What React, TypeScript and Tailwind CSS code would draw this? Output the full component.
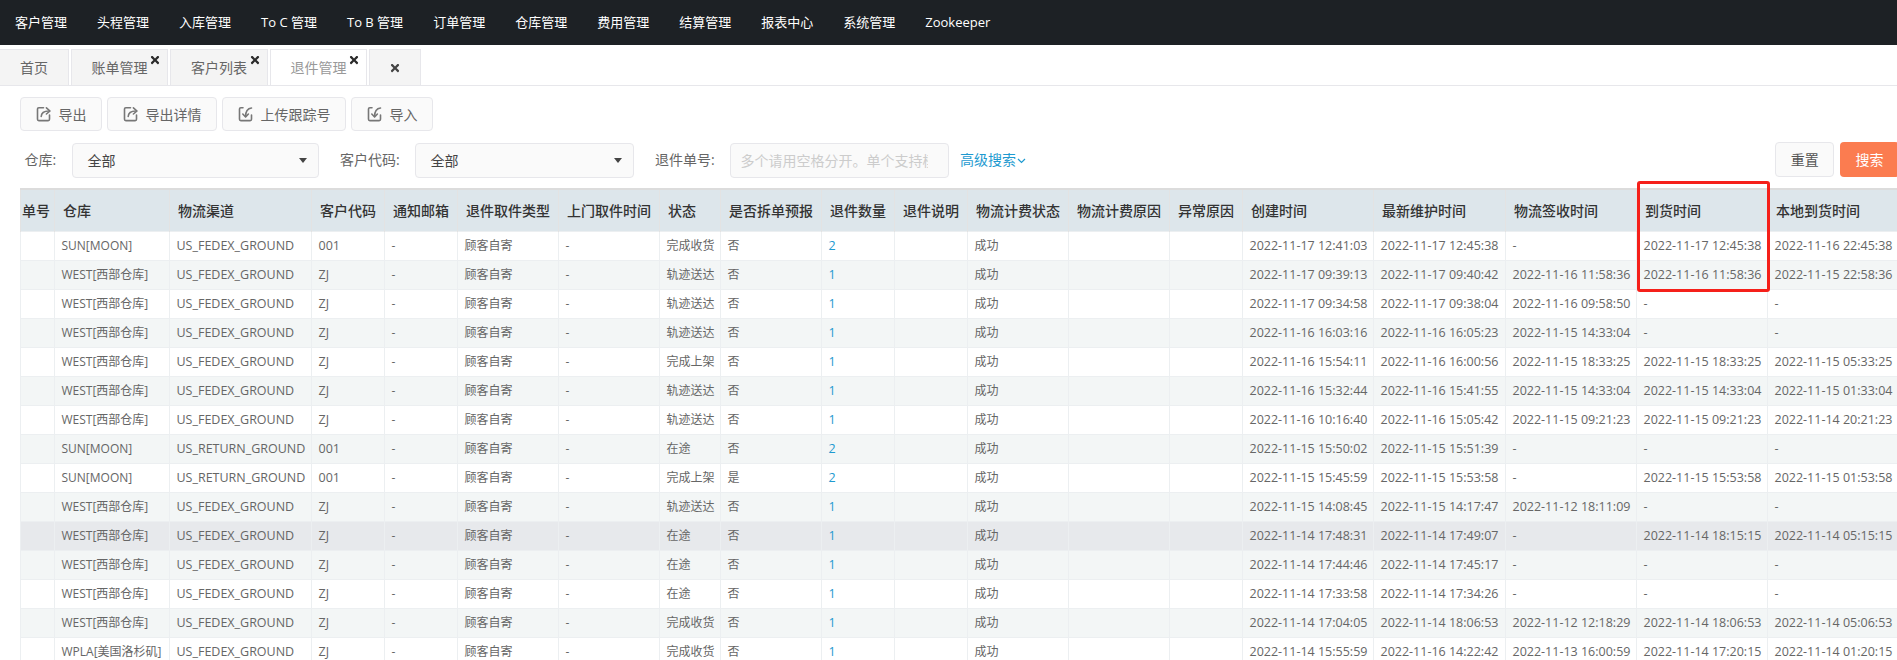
import React from "react";
import { FaTimes } from "react-icons/fa";

const font = "font-['Open_Sans','Noto_Sans_CJK_SC',sans-serif]";

const navItems = ["客户管理", "头程管理", "入库管理", "To C 管理", "To B 管理", "订单管理", "仓库管理", "费用管理", "结算管理", "报表中心", "系统管理", "Zookeeper"];

const headers = ["单号", "仓库", "物流渠道", "客户代码", "通知邮箱", "退件取件类型", "上门取件时间", "状态", "是否拆单预报", "退件数量", "退件说明", "物流计费状态", "物流计费原因", "异常原因", "创建时间", "最新维护时间", "物流签收时间", "到货时间", "本地到货时间"];

const W = "WEST[西部仓库]";
const S = "SUN[MOON]";
const F = "US_FEDEX_GROUND";
const R = "US_RETURN_GROUND";
const D = "2022-11-";

type Row = [string, string, string, string, string, string, string, string, string, string, string];

const rows: Row[] = [
  [S, F, "001", "完成收货", "否", "2", "17 12:41:03", "17 12:45:38", "-", "17 12:45:38", "16 22:45:38"],
  [W, F, "ZJ", "轨迹送达", "否", "1", "17 09:39:13", "17 09:40:42", "16 11:58:36", "16 11:58:36", "15 22:58:36"],
  [W, F, "ZJ", "轨迹送达", "否", "1", "17 09:34:58", "17 09:38:04", "16 09:58:50", "-", "-"],
  [W, F, "ZJ", "轨迹送达", "否", "1", "16 16:03:16", "16 16:05:23", "15 14:33:04", "-", "-"],
  [W, F, "ZJ", "完成上架", "否", "1", "16 15:54:11", "16 16:00:56", "15 18:33:25", "15 18:33:25", "15 05:33:25"],
  [W, F, "ZJ", "轨迹送达", "否", "1", "16 15:32:44", "16 15:41:55", "15 14:33:04", "15 14:33:04", "15 01:33:04"],
  [W, F, "ZJ", "轨迹送达", "否", "1", "16 10:16:40", "16 15:05:42", "15 09:21:23", "15 09:21:23", "14 20:21:23"],
  [S, R, "001", "在途", "否", "2", "15 15:50:02", "15 15:51:39", "-", "-", "-"],
  [S, R, "001", "完成上架", "是", "2", "15 15:45:59", "15 15:53:58", "-", "15 15:53:58", "15 01:53:58"],
  [W, F, "ZJ", "轨迹送达", "否", "1", "15 14:08:45", "15 14:17:47", "12 18:11:09", "-", "-"],
  [W, F, "ZJ", "在途", "否", "1", "14 17:48:31", "14 17:49:07", "-", "14 18:15:15", "14 05:15:15"],
  [W, F, "ZJ", "在途", "否", "1", "14 17:44:46", "14 17:45:17", "-", "-", "-"],
  [W, F, "ZJ", "在途", "否", "1", "14 17:33:58", "14 17:34:26", "-", "-", "-"],
  [W, F, "ZJ", "完成收货", "否", "1", "14 17:04:05", "14 18:06:53", "12 12:18:29", "14 18:06:53", "14 05:06:53"],
  ["WPLA[美国洛杉矶]", F, "ZJ", "完成收货", "否", "1", "14 15:55:59", "16 14:22:42", "13 16:00:59", "14 17:20:15", "14 01:20:15"],
];

const dt = (v: string) => (v === "-" ? "-" : D + v);

function ExportIcon() {
  return (
    <svg width="16" height="16" viewBox="0 0 16 16" fill="none" stroke="#777" strokeWidth="1.6" strokeLinecap="round" strokeLinejoin="round">
      <path d="M7.500 1.800H2.800A1.300 1.300 0 0 0 1.500 3.100v10.200a1.300 1.300 0 0 0 1.300 1.300h9.400a1.300 1.300 0 0 0 1.300-1.300V9" />
      <path d="M5.200 10.500C5.400 7 7.800 5 12.800 5" />
      <path d="M10.400 1.800 14 5l-3.600 3" />
    </svg>
  );
}

function ImportIcon() {
  return (
    <svg width="16" height="16" viewBox="0 0 16 16" fill="none" stroke="#777" strokeWidth="1.6" strokeLinecap="round" strokeLinejoin="round">
      <path d="M5 1.800H2.800A1.300 1.300 0 0 0 1.500 3.100v10.200a1.300 1.300 0 0 0 1.300 1.300h9.400a1.300 1.300 0 0 0 1.300-1.300V9" />
      <path d="M13.500 2C9.500 2.400 7.600 5 7.600 10.500" />
      <path d="M4.800 8 7.600 11l2.800-3" />
    </svg>
  );
}

function ActionButton({ icon, label, className }: { icon: React.ReactNode; label: string; className: string }) {
  return (
    <button className={`flex h-[34px] items-center justify-center gap-[7px] rounded-[4px] border border-[#e7e7eb] bg-[#fafafa] text-[14px] text-[#666] ${className}`}>
      {icon}
      <span>{label}</span>
    </button>
  );
}

function Tab({ label, active, closable, className }: { label: string; active?: boolean; closable?: boolean; className: string }) {
  return (
    <div className={`relative flex h-[36px] items-center justify-center border border-b-0 border-[#e7e7eb] text-[14px] ${active ? "bg-white text-[#999]" : "bg-[#f4f4f4] text-[#666]"} ${className}`}>
      <span>{label}</span>
      {closable && <FaTimes className="absolute right-[6px] top-[4px] text-[12px] text-[#2b2b2b]" />}
    </div>
  );
}

function SelectBox({ className }: { className: string }) {
  return (
    <div className={`flex h-[34.4px] items-center justify-between rounded-[4px] border border-[#e7e7eb] bg-[#fafafa] pl-[15px] pr-[11px] text-[14px] text-[#444] ${className}`}>
      <span>全部</span>
      <span className="h-0 w-0 border-x-[4px] border-t-[5px] border-x-transparent border-t-[#444]" />
    </div>
  );
}

export default function App() {
  return (
    <div className={`relative h-[660px] w-[1897px] overflow-hidden bg-white ${font}`}>
      <nav className="flex h-[45px] items-center bg-[#1d2125] text-[13px] text-white">
        {navItems.map((n) => (
          <a key={n} className="whitespace-nowrap px-[15px]">{n}</a>
        ))}
      </nav>

      <div className="flex h-[41px] items-end gap-[2px] border-b border-[#e7e7eb]">
        <Tab label="首页" className="w-[69px] border-l-0" />
        <Tab label="账单管理" closable className="w-[97px]" />
        <Tab label="客户列表" closable className="w-[98px]" />
        <Tab label="退件管理" active closable className="w-[97px]" />
        <div className="flex h-[36px] w-[52px] items-center justify-center border border-b-0 border-[#e7e7eb] bg-[#f4f4f4]">
          <FaTimes className="text-[12px] text-[#444]" />
        </div>
      </div>

      <div className="mt-[11px] flex gap-[5px] pl-[20px]">
        <ActionButton icon={<ExportIcon />} label="导出" className="w-[82px]" />
        <ActionButton icon={<ExportIcon />} label="导出详情" className="w-[110px]" />
        <ActionButton icon={<ImportIcon />} label="上传跟踪号" className="w-[124px]" />
        <ActionButton icon={<ImportIcon />} label="导入" className="w-[82px]" />
      </div>

      <div className="mt-[12px] flex h-[35px] items-center text-[14px] text-[#666]">
        <span className="ml-[24.500px] w-[47px] whitespace-nowrap pb-[3px]">仓库:</span>
        <SelectBox className="w-[247px]" />
        <span className="ml-[21.500px] w-[74.500px] whitespace-nowrap pb-[3px]">客户代码:</span>
        <SelectBox className="w-[219px]" />
        <span className="ml-[21.500px] w-[74.500px] whitespace-nowrap pb-[3px]">退件单号:</span>
        <input
          readOnly
          placeholder="多个请用空格分开。单个支持模糊查询"
          className="h-[34.4px] w-[219px] rounded-[4px] border border-[#e7e7eb] bg-[#fafafa] pl-[10px] pr-[20px] text-[14px] outline-none placeholder:text-[#ccc]"
        />
        <span className="ml-[11.500px] whitespace-nowrap pb-[3px] text-[#1e9ad0]">高级搜索</span>
        <svg width="9" height="6" viewBox="0 0 9 6" fill="none" stroke="#1e9ad0" strokeWidth="1.2" className="ml-[1px]"><path d="M1 1l3.500 3.500L8 1" /></svg>
        <div className="ml-auto -mr-[2px] -mt-[3px] flex shrink-0 gap-[5.700px]">
          <button className="h-[35px] w-[59px] rounded-[4px] border border-[#e7e7eb] bg-[#fafafa] text-[14px] text-[#555]">重置</button>
          <button className="h-[35px] w-[59px] rounded-[4px] bg-[#fb7c50] text-[14px] text-white">搜索</button>
        </div>
      </div>

      <div className="mt-[10px] ml-[20px] overflow-hidden">
        <table className="w-[1878px] table-fixed border-collapse text-[12px] text-[#666]">
          <colgroup>
            <col className="w-[34px]" />
            <col className="w-[115px]" />
            <col className="w-[142px]" />
            <col className="w-[73px]" />
            <col className="w-[73px]" />
            <col className="w-[101px]" />
            <col className="w-[101px]" />
            <col className="w-[61px]" />
            <col className="w-[101px]" />
            <col className="w-[73px]" />
            <col className="w-[73px]" />
            <col className="w-[101px]" />
            <col className="w-[101px]" />
            <col className="w-[73px]" />
            <col className="w-[131px]" />
            <col className="w-[132px]" />
            <col className="w-[131px]" />
            <col className="w-[131px]" />
            <col className="w-[131px]" />
          </colgroup>
          <thead>
            <tr className="h-[42px] border-t-2 border-[#dcdcdc] bg-[#dde6eb]">
              {headers.map((h, i) => (
                <th key={h} className={`overflow-hidden whitespace-nowrap border-x border-[#e3e3e3] text-left text-[14px] font-medium text-[#333] ${i === 0 ? "pl-[1px]" : "pl-[8px]"}`}>{h}</th>
              ))}
            </tr>
          </thead>
          <tbody>
            {rows.map((r, i) => {
              const bg = i === 10 ? "bg-[#e7e9ec]" : i % 2 === 1 || i === 11 ? "bg-[#f3f6f6]" : "bg-white";
              const cells: { v: string; blue?: boolean; latin?: boolean }[] = [
                { v: "" }, { v: r[0] }, { v: r[1], latin: true }, { v: r[2], latin: true }, { v: "-" }, { v: "顾客自寄" }, { v: "-" }, { v: r[3] }, { v: r[4] }, { v: r[5], blue: true, latin: true }, { v: "" }, { v: "成功" }, { v: "" }, { v: "" },
                { v: dt(r[6]), latin: true }, { v: dt(r[7]), latin: true }, { v: dt(r[8]), latin: true }, { v: dt(r[9]), latin: true }, { v: dt(r[10]), latin: true },
              ];
              return (
                <tr key={i} className={`h-[29px] ${bg}`}>
                  {cells.map((c, j) => (
                    <td key={j} className={`overflow-hidden whitespace-nowrap border border-[#eceff1] pl-[6.500px] ${c.latin ? "pt-[2px] text-[12.500px]" : ""} ${c.blue ? "text-[#1e9ad0]" : ""}`}>{c.v}</td>
                  ))}
                </tr>
              );
            })}
          </tbody>
        </table>
      </div>

      <div className="absolute left-[1636.500px] top-[181px] h-[110.500px] w-[133px] rounded-[3px] border-[3px] border-[#f5201a]" />
    </div>
  );
}
